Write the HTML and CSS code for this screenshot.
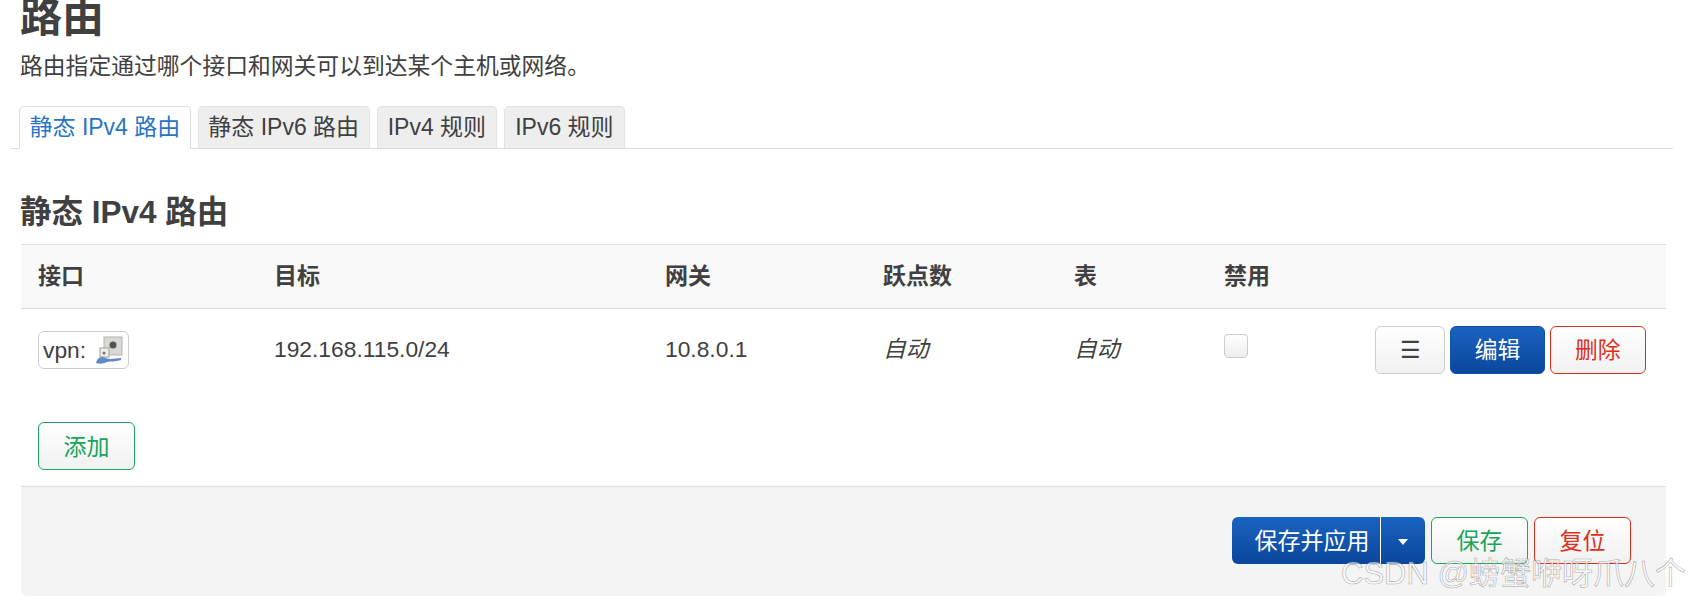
FILE: index.html
```html
<!DOCTYPE html>
<html lang="zh-CN">
<head>
    <meta charset="UTF-8">
    <title>路由</title>
    <link rel="stylesheet" href="styles.css">
</head>
<body>
    <div class="page">
        <h1>路由</h1>
        <p class="desc">路由指定通过哪个接口和网关可以到达某个主机或网络。</p>

        <ul class="tabs">
            <li class="tab active">静态 IPv4 路由</li>
            <li class="tab">静态 IPv6 路由</li>
            <li class="tab">IPv4 规则</li>
            <li class="tab">IPv6 规则</li>
        </ul>

        <h3>静态 IPv4 路由</h3>

        <table class="routes">
            <thead>
                <tr>
                    <th class="col-iface">接口</th>
                    <th class="col-target">目标</th>
                    <th class="col-gateway">网关</th>
                    <th class="col-metric">跃点数</th>
                    <th class="col-table">表</th>
                    <th class="col-disabled">禁用</th>
                    <th></th>
                </tr>
            </thead>
            <tbody>
                <tr>
                    <td>
                        <span class="iface-badge">vpn:
                            <svg class="iface-icon" width="28" height="30" viewBox="0 0 28 30">
                                <rect x="9" y="2" width="18" height="18" fill="#d8d8d4" stroke="#b4b4b0"/>
                                <circle cx="18" cy="10" r="3.5" fill="#55534e"/>
                                <rect x="5" y="13" width="9" height="9" fill="#eeeeea" stroke="#9c9c98"/>
                                <circle cx="9" cy="18" r="1.5" fill="#77756f"/>
                                <path d="M1 28c1-4 3-6 7-6l3 1c4 2 9 0 15 0v2c-6 2-10 1-14 2-4 2-8 2-11 1z" fill="#5f8cc8"/>
                            </svg>
                        </span>
                    </td>
                    <td>192.168.115.0/24</td>
                    <td>10.8.0.1</td>
                    <td><em>自动</em></td>
                    <td><em>自动</em></td>
                    <td><span class="check"></span></td>
                    <td>
                        <div class="row-actions">
                            <button class="btn btn-menu">☰</button>
                            <button class="btn btn-primary">编辑</button>
                            <button class="btn btn-danger">删除</button>
                        </div>
                    </td>
                </tr>
            </tbody>
        </table>

        <div class="add-row">
            <button class="btn btn-add">添加</button>
        </div>

        <div class="footer">
            <div class="split-btn">
                <button class="split-main">保存并应用</button>
                <button class="split-arrow"><span class="caret"></span></button>
            </div>
            <button class="btn btn-add">保存</button>
            <button class="btn btn-danger">复位</button>
        </div>
    </div>

    <div class="watermark">CSDN @螃蟹咿呀爪八个</div>
</body>
</html>
```

FILE: styles.css
```css
* { margin: 0; padding: 0; box-sizing: border-box; }
html, body { height: 604px; overflow: hidden; }
body { font-family: "Liberation Sans", "Noto Sans CJK SC", sans-serif; font-size: 23px; color: #404040; background: #fff; position: relative; }
.page { padding: 0 28px 0 21px; }

h1 { font-size: 42px; line-height: 40px; font-weight: bold; margin: -2px 0 0 -1px; }
.desc { font-size: 22.8px; line-height: 30px; margin: 13px 0 0 -1px; }

.tabs { list-style: none; display: flex; gap: 7px; margin: 25px -7px 0 -10px; padding-left: 8px; border-bottom: 1px solid #ddd; height: 43px; }
.tab { height: 43px; min-width: 120.5px; padding: 0 9.5px; font-size: 23px; line-height: 41px; text-align: center; background: #eee; border: 1px solid #e2e2e2; border-bottom: 1px solid #ddd; border-radius: 5px 5px 0 0; white-space: nowrap; }
.tab.active { background: #fff; color: #2a74c4; border-color: #ddd; border-bottom-color: #fff; }

h3 { font-size: 31.5px; line-height: 36px; font-weight: bold; margin: 45px 0 0 -1px; }

.routes { width: 1645px; border-collapse: collapse; margin-top: 14px; table-layout: fixed; }
.routes th { height: 64px; text-align: left; padding: 0 0 6px 17px; font-weight: bold; background: #f9f9f9; border-top: 1px solid #ddd; border-bottom: 1px solid #ddd; }
.routes td { padding: 17px 0 0 17px; height: 65px; vertical-align: top; font-size: 22.8px; line-height: 46px; white-space: nowrap; }
.routes td em { font-style: italic; }
.col-iface { width: 236px; }
.col-target { width: 391px; }
.col-gateway { width: 218px; }
.col-metric { width: 191px; }
.col-table { width: 150px; }
.col-disabled { width: 151px; }

.iface-badge { display: inline-flex; align-items: center; gap: 9px; width: 91px; height: 38px; padding-left: 4px; margin-top: 5px; line-height: 34px; background: #fff; border: 1px solid #ccc; border-radius: 6px; vertical-align: top; }
.iface-icon { flex: none; }
.check { display: block; width: 24px; height: 24px; margin-top: 8px; border: 1px solid #ccc; border-radius: 4px; background: linear-gradient(#fff, #eee); }

.row-actions { display: flex; justify-content: flex-end; gap: 5px; padding-right: 20px; }

.btn { height: 48px; width: 97px; padding-bottom: 3px; font: inherit; background: linear-gradient(#fff, #f1f1f1); border: 1px solid #ccc; border-radius: 6px; color: #404040; }
.btn-menu { width: 71px; }
.btn-primary { width: 95px; color: #fff; border-color: #0e55ad; background: linear-gradient(#1a62c0, #0a479c); }
.btn-danger { width: 97px; color: #dc3020; border-color: #d9301c; }
.btn-add { color: #1aa55a; border-color: #1aa55a; }

.add-row { padding: 48px 0 16px 17px; }

.footer { display: flex; justify-content: flex-end; align-items: flex-start; gap: 6px; width: 1645px; height: 110px; padding: 30px 35px 0 0; background: #f4f4f4; border-top: 1px solid #ddd; border-radius: 0 0 6px 6px; }
.split-btn { display: flex; height: 47px; }
.split-main, .split-arrow { font: inherit; color: #fff; border: none; background: linear-gradient(#1a62c0, #0a479c); }
.split-main { width: 148px; padding: 0 0 3px 12px; border-radius: 6px 0 0 6px; }
.split-arrow { width: 45px; border-left: 1px solid #fff; border-radius: 0 6px 6px 0; }
.caret { display: inline-block; border: 5px solid transparent; border-top: 6px solid #fff; border-bottom: 0; vertical-align: middle; }
.footer .btn { height: 47px; }

.watermark { position: absolute; left: 1341px; top: 555px; font-size: 31px; line-height: 38px; white-space: nowrap; color: rgba(255, 255, 255, 0.6); -webkit-text-stroke: 0.6px rgba(130, 130, 130, 0.65); }
```
